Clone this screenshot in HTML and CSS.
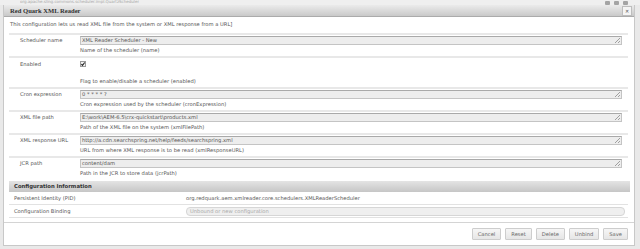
FILE: index.html
```html
<!DOCTYPE html>
<html>
<head>
<meta charset="utf-8">
<link rel="stylesheet" href="styles.css">
</head>
<body>
<div class="topstrip">
  <span class="crumb">org.apache.sling.commons.scheduler.impl.QuartzScheduler</span>
  <span class="tools"><i></i><i></i><i></i></span>
</div>
<div class="dialog">
  <div class="dialog-header">
    <span class="title">Red Quark XML Reader</span>
    <span class="close">✕</span>
  </div>
  <div class="content">
    <div class="intro">This configuration lets us read XML file from the system or XML response from a URL]</div>
    <div class="props">
      <div class="row">
        <div class="label">Scheduler name</div>
        <div class="cell">
          <div class="field">XML Reader Scheduler - New</div>
          <div class="hint">Name of the scheduler (name)</div>
        </div>
      </div>
      <div class="row">
        <div class="label">Enabled</div>
        <div class="cell">
          <div class="checkarea">
            <svg class="check" width="6" height="6" viewBox="0 0 6 6"><rect x="0.5" y="0.5" width="5" height="5" fill="#f0f0f0" stroke="#9a9a9a"/><path d="M1.4 3.1 L2.5 4.3 L4.7 1.5" fill="none" stroke="#222" stroke-width="1.1"/></svg>
          </div>
          <div class="hint">Flag to enable/disable a scheduler (enabled)</div>
        </div>
      </div>
      <div class="row">
        <div class="label">Cron expression</div>
        <div class="cell">
          <div class="field">0 * * * * ?</div>
          <div class="hint">Cron expression used by the scheduler (cronExpression)</div>
        </div>
      </div>
      <div class="row">
        <div class="label">XML file path</div>
        <div class="cell">
          <div class="field">E:\work\AEM-6.5\crx-quickstart\products.xml</div>
          <div class="hint">Path of the XML file on the system (xmlFilePath)</div>
        </div>
      </div>
      <div class="row">
        <div class="label">XML response URL</div>
        <div class="cell">
          <div class="field">http://a.cdn.searchspring.net/help/feeds/searchspring.xml</div>
          <div class="hint">URL from where XML response is to be read (xmlResponseURL)</div>
        </div>
      </div>
      <div class="row">
        <div class="label">JCR path</div>
        <div class="cell">
          <div class="field">content/dam</div>
          <div class="hint">Path in the JCR to store data (jcrPath)</div>
        </div>
      </div>
    </div>
    <div class="config">
      <div class="config-header">Configuration Information</div>
      <div class="crow">
        <div class="clabel">Persistent Identity (PID)</div>
        <div class="cvalue">org.redquark.aem.xmlreader.core.schedulers.XMLReaderScheduler</div>
      </div>
      <div class="crow">
        <div class="clabel">Configuration Binding</div>
        <div class="cvalue"><div class="binding">Unbound or new configuration</div></div>
      </div>
    </div>
  </div>
  <div class="buttons">
    <span class="btn">Cancel</span>
    <span class="btn">Reset</span>
    <span class="btn">Delete</span>
    <span class="btn">Unbind</span>
    <span class="btn">Save</span>
  </div>
</div>
</body>
</html>
```
FILE: styles.css
```css
html, body {
  margin: 0;
  padding: 0;
}
body {
  width: 640px;
  height: 249px;
  overflow: hidden;
  background: #e9e9e9;
  font-family: "DejaVu Sans", Verdana, sans-serif;
  font-size: 5.2px;
  color: #444;
}
.topstrip {
  height: 5px;
  display: flex;
  justify-content: space-between;
  align-items: flex-start;
  overflow: hidden;
  background: #efefef;
  padding: 0 12px 0 20px;
}
.crumb {
  display: block;
  height: 5px;
  line-height: 4px;
  font-size: 4px;
  overflow: hidden;
  color: #a8a8a8;
}
.tools {
  display: flex;
  gap: 4px;
  padding-top: 1px;
}
.tools i {
  display: block;
  width: 5px;
  height: 4px;
  background: #a4a4a4;
  border-radius: 1px;
}
.dialog {
  margin-left: 3px;
  width: 630px;
  height: 240px;
  background: #fff;
  border: 1px solid #c8c8c8;
  border-top: 0;
  display: flex;
  flex-direction: column;
}
.dialog-header {
  height: 11px;
  display: flex;
  align-items: center;
  justify-content: space-between;
  padding: 0 2px 0 6px;
  background: linear-gradient(#ebebeb, #c9c9c9);
  border-bottom: 1px solid #ababab;
}
.title {
  font-family: "Liberation Serif", "Times New Roman", serif;
  font-weight: bold;
  font-size: 6.6px;
  color: #333;
}
.close {
  width: 8px;
  height: 8px;
  border: 1px solid #bdbdbd;
  background: #f4f4f4;
  font-size: 5px;
  line-height: 8px;
  text-align: center;
  color: #555;
  font-weight: bold;
}
.content {
  padding: 0 6px 0 5px;
}
.intro {
  height: 13px;
  padding-top: 3px;
  line-height: 9px;
  color: #555;
  padding-left: 1px;
}
.row {
  display: grid;
  grid-template-columns: 71px 1fr;
  border-top: 2px solid #e8e8e8;
  padding: 1px 0 1px;
}
.label {
  padding-left: 11px;
  line-height: 9px;
  color: #555;
}
.row:nth-child(2) .label {
  padding-top: 1px;
}
.cell {
  padding-right: 6px;
}
.field {
  position: relative;
  height: 7px;
  line-height: 7px;
  background: #ededed;
  border: 1px solid #c4c4c4;
  border-top-color: #a9a9a9;
  padding-left: 1px;
  color: #555;
  white-space: nowrap;
  overflow: hidden;
}
.field::after {
  content: "";
  position: absolute;
  right: 1px;
  bottom: 1px;
  width: 5px;
  height: 5px;
  background: linear-gradient(135deg, transparent 45%, #a0a0a0 45%, #a0a0a0 55%, transparent 55%, transparent 72%, #a0a0a0 72%, #a0a0a0 82%, transparent 82%);
}
.hint {
  margin-top: 1px;
  line-height: 9px;
  color: #555;
}
.checkarea {
  height: 17px;
  padding-top: 2px;
  box-sizing: border-box;
}
.check {
  display: block;
}
.config {
  margin-top: 2px;
  margin-right: -2px;
}
.config-header {
  height: 11px;
  line-height: 11px;
  padding-left: 5px;
  background: linear-gradient(#e4e4e4, #c6c6c6);
  font-weight: bold;
  color: #333;
  font-size: 5.3px;
}
.crow {
  display: grid;
  grid-template-columns: 177px 1fr;
  height: 12px;
  align-items: center;
  border-bottom: 1px solid #e2e2e2;
  margin-right: 2px;
}
.clabel {
  padding-left: 5px;
  color: #555;
}
.cvalue {
  color: #555;
  padding-right: 3px;
}
.binding {
  height: 7px;
  line-height: 7px;
  border: 1px solid #d6d6d6;
  border-radius: 4px;
  background: #efefef;
  color: #aaa;
  padding-left: 3px;
}
.buttons {
  margin-top: 4px;
  border-top: 1px solid #d4d4d4;
  padding: 5px 6px 0 0;
  display: flex;
  justify-content: flex-end;
  gap: 4px;
}
.btn {
  height: 10px;
  line-height: 10px;
  padding: 0 5px;
  border: 1px solid #cdcdcd;
  border-radius: 1px;
  background: linear-gradient(#f6f6f6, #e6e6e6);
  color: #666;
}
```
